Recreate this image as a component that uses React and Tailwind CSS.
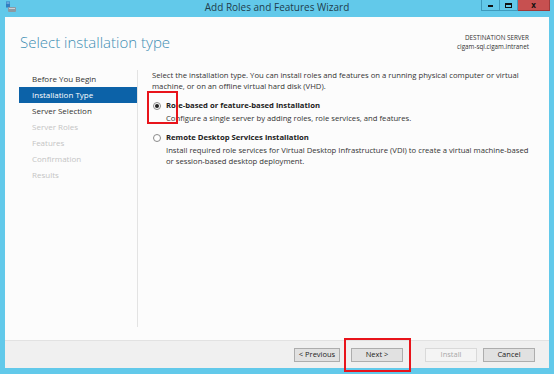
import React from 'react';

const font = { fontFamily: '"Open Sans", "Noto Sans", sans-serif' };

const steps = [
    { label: 'Before You Begin', state: 'done' },
    { label: 'Installation Type', state: 'active' },
    { label: 'Server Selection', state: 'done' },
    { label: 'Server Roles', state: 'off' },
    { label: 'Features', state: 'off' },
    { label: 'Confirmation', state: 'off' },
    { label: 'Results', state: 'off' },
];

function AppIcon() {
    return (
        <svg width="12" height="12" viewBox="0 0 12 12">
            <rect x="1" y="0.5" width="4" height="6" fill="#2f7fc2" />
            <rect x="1.5" y="1.5" width="3" height="1" fill="#9fd0f2" />
            <rect x="3" y="6" width="8" height="5" rx="1" fill="#8c9aa3" />
            <rect x="4" y="7" width="6" height="1" fill="#c9d2d8" />
        </svg>
    );
}

function Radio({ checked }) {
    return (
        <span className="w-[8px] h-[8px] rounded-full border border-[#8a8a8a] bg-white flex items-center justify-center shrink-0">
            {checked && <span className="w-[4px] h-[4px] rounded-full bg-[#222]" />}
        </span>
    );
}

function Button({ children, disabled, className }) {
    return (
        <button
            className={
                'h-[14px] text-[7.5px] leading-none border shrink-0 ' +
                (disabled
                    ? 'bg-[#f4f4f4] border-[#d9d9d9] text-[#a8a8a8] '
                    : 'bg-[#e1e1e1] border-[#adadad] text-[#222] ') +
                className
            }
        >
            {children}
        </button>
    );
}

export default function App() {
    return (
        <div className="w-[554px] h-[374px] bg-[#62c9ea] flex flex-col relative overflow-hidden" style={font}>
            {/* title bar */}
            <div className="h-[17px] flex items-start relative shrink-0">
                <div className="pl-[5px] pt-[1px]">
                    <AppIcon />
                </div>
                <div className="absolute left-0 right-0 top-[1px] text-center text-[10px] text-[#1f3d4c] leading-[13px]">
                    Add Roles and Features Wizard
                </div>
                <div className="ml-auto flex mr-[4px]">
                    <div className="w-[19px] h-[11px] border border-[#3f9bbd] border-t-0 flex items-end justify-center pb-[3px]">
                        <span className="w-[5px] h-[2px] bg-[#111]" />
                    </div>
                    <div className="w-[18px] h-[11px] border border-[#3f9bbd] border-t-0 border-l-0 flex items-center justify-center">
                        <span className="w-[7px] h-[5px] border border-[#111] border-t-2" />
                    </div>
                    <div className="w-[32px] h-[11px] bg-[#c75050] border border-[#9e3a3a] border-t-0 border-l-0 flex items-center justify-center text-[8px] font-bold text-[#111] leading-none">
                        x
                    </div>
                </div>
            </div>

            {/* body */}
            <div className="mx-[5px] flex-1 flex flex-col bg-[#fcfcfc]">
                <div className="h-[53px] flex justify-between pl-[15px] pr-[20px]">
                    <div className="pt-[15px] text-[15px] font-light text-[#3d8db3] leading-[20px]">
                        Select installation type
                    </div>
                    <div className="pt-[16px] text-right text-[6.3px] leading-[9px] text-[#333]">
                        <div>DESTINATION SERVER</div>
                        <div>cigam-sql.cigam.intranet</div>
                    </div>
                </div>

                <div className="flex flex-1">
                    <div className="w-[133px] pl-[14px] pt-[1px] border-r border-[#e3e3e3] mb-[13px] text-[8px]">
                        {steps.map((s) => (
                            <div
                                key={s.label}
                                className={
                                    'h-[16px] pl-[13px] flex items-center ' +
                                    (s.state === 'active'
                                        ? 'bg-[#0c62a8] text-white'
                                        : s.state === 'done'
                                        ? 'text-[#333]'
                                        : 'text-[#c4c4c4]')
                                }
                            >
                                {s.label}
                            </div>
                        ))}
                    </div>

                    <div className="flex-1 pl-[14px] text-[7.7px] leading-[11px] text-[#333] whitespace-nowrap">
                        <p>
                            Select the installation type. You can install roles and features on a running physical computer or virtual
                            <br />
                            machine, or on an offline virtual hard disk (VHD).
                        </p>
                        <div className="mt-[8px]">
                            <div className="flex items-center gap-[5px] pl-[1px]">
                                <Radio checked />
                                <span className="font-bold text-[#222]">Role-based or feature-based installation</span>
                            </div>
                            <div className="pl-[14px] mt-[2px]">
                                Configure a single server by adding roles, role services, and features.
                            </div>
                        </div>
                        <div className="mt-[8px]">
                            <div className="flex items-center gap-[5px] pl-[1px]">
                                <Radio />
                                <span className="font-bold text-[#222]">Remote Desktop Services installation</span>
                            </div>
                            <div className="pl-[14px] mt-[2px]">
                                Install required role services for Virtual Desktop Infrastructure (VDI) to create a virtual machine-based
                                <br />
                                or session-based desktop deployment.
                            </div>
                        </div>
                    </div>
                </div>

                <div className="h-[28px] bg-[#f0f0f0] border-t border-[#e2e2e2] flex items-start justify-end pt-[7px] pr-[14px] shrink-0">
                    <Button className="w-[46px]">&lt; Previous</Button>
                    <Button className="w-[52px] ml-[11px]">Next &gt;</Button>
                    <Button className="w-[52px] ml-[22px]" disabled>Install</Button>
                    <Button className="w-[52px] ml-[6px]">Cancel</Button>
                </div>
            </div>
            <div className="h-[6px] shrink-0" />

            {/* annotation boxes */}
            <div className="absolute left-[147px] top-[91px] w-[31px] h-[33px] border-2 border-[#e8141b]" />
            <div className="absolute left-[344px] top-[338px] w-[67px] h-[34px] border-2 border-[#e8141b]" />
        </div>
    );
}
